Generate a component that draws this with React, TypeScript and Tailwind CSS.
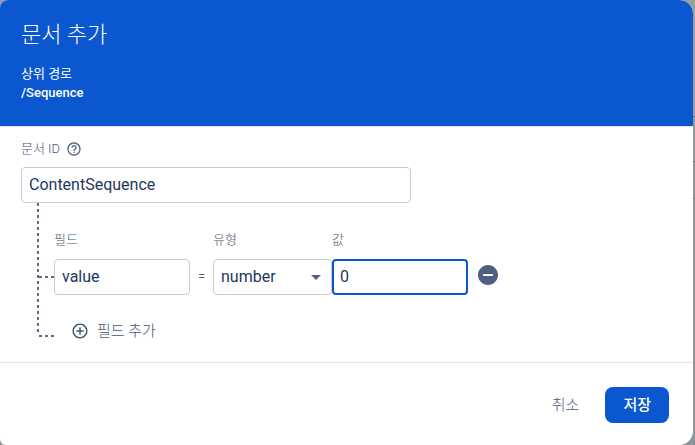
import { useState } from "react";
import {
  MdAddCircleOutline,
  MdArrowDropDown,
  MdHelpOutline,
  MdRemoveCircle,
} from "react-icons/md";

const dashDown =
  "bg-[repeating-linear-gradient(to_bottom,#5f6d8a_0px,#5f6d8a_3px,transparent_3px,transparent_6px)]";
const dashRight =
  "bg-[repeating-linear-gradient(to_right,#5f6d8a_0px,#5f6d8a_3px,transparent_3px,transparent_6px)]";

// Dimmed page behind the dialog, with the row lines of its panels.
const backdrop =
  "bg-[linear-gradient(to_bottom,#9b9da1_0px,#9b9da1_116px,#6f7378_116px,#6f7378_117px,#92979c_117px,#92979c_161px,#6f7378_161px,#6f7378_162px,#8f969b_162px,#8f969b_198px,#767b80_198px,#767b80_199px,#8f969b_199px)]";

const box =
  "h-9 w-full rounded-[4px] border border-[#c8ccd8] bg-white px-[7px] text-base text-[#22375f] outline-none";

const labelText = "text-[13px] leading-5 font-light text-[#465678]";

const types = ["string", "number", "boolean", "map", "array", "null", "timestamp"];

export default function App() {
  const [docId, setDocId] = useState("ContentSequence");
  const [field, setField] = useState("value");
  const [type, setType] = useState("number");
  const [value, setValue] = useState("0");

  return (
    <div
      className={`flex min-h-screen flex-col overflow-hidden pr-[2px] font-['Roboto','Noto_Sans_CJK_KR',sans-serif] text-[#536384] ${backdrop}`}
    >
      <main
        role="dialog"
        aria-labelledby="title"
        className="flex flex-1 flex-col overflow-hidden rounded-tl-[8px] rounded-tr-[14px] rounded-br-[14px] rounded-bl-[6px] bg-white"
      >
        <header className="border-b border-[#e0e3ea] bg-[#0b57d0] px-[21px] pt-5 pb-6 text-white">
          <h1 id="title" className="text-[22px] leading-[30px] font-light">
            문서 추가
          </h1>
          <p className="mt-[14px] text-[13px] leading-5">상위 경로</p>
          <p className="text-[13px] leading-[18px] font-medium">/Sequence</p>
        </header>

        <form className="flex flex-1 flex-col" onSubmit={(e) => e.preventDefault()}>
          <section className="flex-1 px-[21px] pt-3 pb-4">
            <div className="flex items-center gap-1.5 pb-2">
              <label htmlFor="doc-id" className={labelText}>
                문서 ID
              </label>
              <MdHelpOutline size={16} />
            </div>
            <input
              id="doc-id"
              className={`${box} block max-w-[390px] pb-[2px]`}
              value={docId}
              onChange={(e) => setDocId(e.target.value)}
            />

            <div className="flex pl-4">
              <div className={`h-[132px] w-[2px] shrink-0 ${dashDown}`} />
              <div className="flex-1 pt-[27px]">
                <div className="flex items-end">
                  <div className="flex h-9 w-[15px] items-center">
                    <div className={`h-[2px] w-full ${dashRight}`} />
                  </div>
                  <div className="w-[136px]">
                    <label htmlFor="field" className={`block pb-[9px] ${labelText}`}>
                      필드
                    </label>
                    <input
                      id="field"
                      className={`${box} block pb-[2px]`}
                      value={field}
                      onChange={(e) => setField(e.target.value)}
                    />
                  </div>
                  <span className="w-[23px] text-center text-[13px] leading-9">=</span>
                  <div className="w-[119px]">
                    <label htmlFor="type" className={`block pb-[9px] ${labelText}`}>
                      유형
                    </label>
                    <div className="grid items-center">
                      <select
                        id="type"
                        className={`${box} col-start-1 row-start-1 appearance-none`}
                        value={type}
                        onChange={(e) => setType(e.target.value)}
                      >
                        {types.map((t) => (
                          <option key={t}>{t}</option>
                        ))}
                      </select>
                      <MdArrowDropDown
                        size={24}
                        className="pointer-events-none col-start-1 row-start-1 mr-1 justify-self-end"
                      />
                    </div>
                  </div>
                  <div className="w-[136px]">
                    <label htmlFor="value" className={`block pb-[9px] ${labelText}`}>
                      값
                    </label>
                    <input
                      id="value"
                      className="block h-9 w-full rounded-[4px] border-2 border-[#0b57d0] bg-white px-[6px] pb-[2px] text-base text-[#22375f] outline-none"
                      value={value}
                      onChange={(e) => setValue(e.target.value)}
                    />
                  </div>
                  <button
                    type="button"
                    aria-label="필드 삭제"
                    className="mb-2 ml-2 text-[#4f5f80]"
                  >
                    <MdRemoveCircle size={24} />
                  </button>
                </div>

                <div className="flex items-end pt-[26px]">
                  <div className={`mb-1 h-[2px] w-[15px] ${dashRight}`} />
                  <button
                    type="button"
                    className="ml-[17px] flex items-center gap-2 text-[15px] leading-5 font-light text-[#465678]"
                  >
                    <MdAddCircleOutline size={18} />
                    필드 추가
                  </button>
                </div>
              </div>
            </div>
          </section>

          <footer className="flex items-center justify-end gap-2 border-t border-[#e3e4e8] px-6 pt-6 pb-[22px]">
            <button
              type="button"
              className="h-9 px-[18px] text-[15px] font-light text-[#465678]"
            >
              취소
            </button>
            <button
              type="submit"
              className="h-9 rounded-lg bg-[#0b57d0] px-[18px] text-[15px] font-medium text-white"
            >
              저장
            </button>
          </footer>
        </form>
      </main>
    </div>
  );
}
